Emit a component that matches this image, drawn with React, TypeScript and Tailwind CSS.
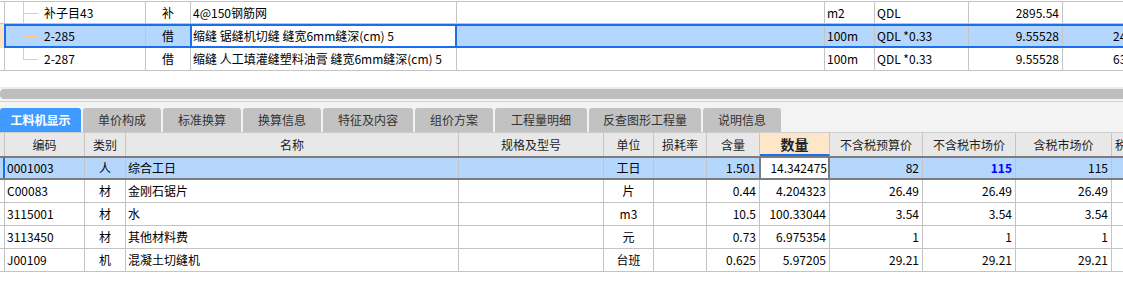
import React from "react";

const FONT = "font-['Noto_Sans_CJK_SC','Noto_Sans',sans-serif]";

const tabs = [
  { label: "工料机显示", w: "w-[81px]", active: true },
  { label: "单价构成", w: "w-[78px]" },
  { label: "标准换算", w: "w-[78px]" },
  { label: "换算信息", w: "w-[78px]" },
  { label: "特征及内容", w: "w-[90px]" },
  { label: "组价方案", w: "w-[78px]" },
  { label: "工程量明细", w: "w-[92px]" },
  { label: "反查图形工程量", w: "w-[112px]" },
  { label: "说明信息", w: "w-[78px]" },
];

type Row = {
  code: string;
  type: string;
  name: string;
  unit: string;
  amt: string;
  qty: string;
  p1: string;
  p2: string;
  p3: string;
};

const rows: Row[] = [
  { code: "0001003", type: "人", name: "综合工日", unit: "工日", amt: "1.501", qty: "14.342475", p1: "82", p2: "115", p3: "115" },
  { code: "C00083", type: "材", name: "金刚石锯片", unit: "片", amt: "0.44", qty: "4.204323", p1: "26.49", p2: "26.49", p3: "26.49" },
  { code: "3115001", type: "材", name: "水", unit: "m3", amt: "10.5", qty: "100.33044", p1: "3.54", p2: "3.54", p3: "3.54" },
  { code: "3113450", type: "材", name: "其他材料费", unit: "元", amt: "0.73", qty: "6.975354", p1: "1", p2: "1", p3: "1" },
  { code: "J00109", type: "机", name: "混凝土切缝机", unit: "台班", amt: "0.625", qty: "5.97205", p1: "29.21", p2: "29.21", p3: "29.21" },
];

function TreeMark({ last, left }: { last?: boolean; left: string }) {
  return (
    <>
      <span className={`absolute ${left} top-0 w-px bg-[#ffc878] ${last ? "h-1/2" : "bottom-0"}`} />
      <span className={`absolute ${left} top-1/2 w-[15px] h-px bg-[#ffc878]`} />
    </>
  );
}

function TopGrid() {
  const cell = "shrink-0 border-r border-[#c4c4c4] flex items-center";
  return (
    <div className="mt-px border-t border-[#c4c4c4]">
      {/* row 1 */}
      <div className="flex h-[22px] border-b border-[#c4c4c4]">
        <div className={`w-[5px] ${cell}`} />
        <div className={`relative w-[141px] pl-[39px] ${cell}`}>
          <TreeMark left="left-[18px]" />
          补子目43
        </div>
        <div className={`w-[45px] justify-center ${cell}`}>补</div>
        <div className={`w-[266px] pl-[2px] ${cell}`}>4@150钢筋网</div>
        <div className={`w-[368px] ${cell}`} />
        <div className={`w-[50px] pl-[2px] ${cell}`}>m2</div>
        <div className={`w-[94px] pl-[2px] ${cell}`}>QDL</div>
        <div className={`w-[94px] justify-end pr-[3px] ${cell}`}>2895.54</div>
        <div className="flex-1" />
      </div>
      {/* row 2 selected */}
      <div className="flex h-[24px]">
        <div className="w-[4px] shrink-0 bg-[#fde2c4]" />
        <div className="flex flex-1 border-y-2 border-l-2 border-[#1a6ff0] bg-[#b5d7fd]">
          <div className={`relative w-[140px] pl-[38px] ${cell}`}>
            <TreeMark left="left-[17px]" />
            2-285
          </div>
          <div className="w-[44px] shrink-0 flex items-center justify-center">借</div>
          <div className="w-[267px] shrink-0 flex items-center pl-[1px] bg-white border-x-2 border-[#1a6ff0]">
            缩缝 锯缝机切缝 缝宽6mm缝深(cm) 5
          </div>
          <div className={`w-[368px] ${cell}`} />
          <div className={`w-[50px] pl-[2px] ${cell}`}>100m</div>
          <div className={`w-[94px] pl-[2px] ${cell}`}>QDL *0.33</div>
          <div className={`w-[94px] justify-end pr-[3px] ${cell}`}>9.55528</div>
          <div className="flex-1 flex items-center pl-[50px] whitespace-nowrap">2436.84</div>
        </div>
      </div>
      {/* row 3 */}
      <div className="flex h-[23px] border-b border-[#c4c4c4]">
        <div className={`w-[5px] ${cell}`} />
        <div className={`relative w-[141px] pl-[39px] ${cell}`}>
          <TreeMark left="left-[18px]" last />
          2-287
        </div>
        <div className={`w-[45px] justify-center ${cell}`}>借</div>
        <div className={`w-[266px] pl-[2px] whitespace-nowrap ${cell}`}>缩缝 人工填灌缝塑料油膏 缝宽6mm缝深(cm) 5</div>
        <div className={`w-[368px] ${cell}`} />
        <div className={`w-[50px] pl-[2px] ${cell}`}>100m</div>
        <div className={`w-[94px] pl-[2px] ${cell}`}>QDL *0.33</div>
        <div className={`w-[94px] justify-end pr-[3px] ${cell}`}>9.55528</div>
        <div className="flex-1 flex items-center pl-[50px] whitespace-nowrap">6354.12</div>
      </div>
    </div>
  );
}

function TabStrip() {
  return (
    <div>
      <div className="h-[2px] bg-[#ebebeb]" />
      <div className="h-[10px] bg-[#bebebe] rounded-l-[4px]" />
      <div className="h-[2px] bg-[#f4f4f4]" />
      <div className="h-px bg-[#d4d4d4]" />
      <div className="h-[30px] bg-[#f3f3f3] flex items-end gap-[2px]">
        {tabs.map((t) => (
          <div
            key={t.label}
            className={`${t.w} h-[24px] shrink-0 rounded-t-[3px] flex items-center justify-center text-[12px] ${
              t.active ? "bg-[#3f9bff] text-white font-bold" : "bg-[#c2c2c2] text-[#333]"
            }`}
          >
            {t.label}
          </div>
        ))}
      </div>
    </div>
  );
}

function Header() {
  const h = "shrink-0 border-r border-[#c4c4c4] flex items-center justify-center";
  return (
    <div className="flex h-[24px] bg-[#e8e8e8] border-t border-[#cdcdcd] text-[12px] text-[#1e1e1e]">
      <div className={`w-[5px] ${h}`} />
      <div className={`w-[80px] ${h}`}>编码</div>
      <div className={`w-[41px] ${h}`}>类别</div>
      <div className={`w-[333px] ${h}`}>名称</div>
      <div className={`w-[145px] ${h}`}>规格及型号</div>
      <div className={`w-[50px] ${h}`}>单位</div>
      <div className={`w-[53px] ${h}`}>损耗率</div>
      <div className={`w-[53px] ${h}`}>含量</div>
      <div className={`w-[70px] ${h} bg-[#fee6c8] border-b-2 border-b-[#1a6ff0] text-[14px] font-bold text-[#222]`}>数量</div>
      <div className={`w-[93px] ${h}`}>不含税预算价</div>
      <div className={`w-[93px] ${h}`}>不含税市场价</div>
      <div className={`w-[96px] ${h}`}>含税市场价</div>
      <div className="flex-1 flex items-center pl-[3px] whitespace-nowrap">税率(%)</div>
    </div>
  );
}

function BodyRow({ r, selected }: { r: Row; selected?: boolean }) {
  const c = "shrink-0 border-r border-[#c4c4c4] flex items-center";
  const rowCls = selected
    ? "flex h-[24px] border-y-2 border-[#7c7c7c] bg-[#b5d7fd]"
    : "flex h-[23px] border-b border-[#c4c4c4]";
  return (
    <div className={rowCls}>
      {selected ? (
        <div className="w-[5px] shrink-0 flex">
          <div className="ml-[3px] w-[2px] bg-[#1a6ff0]" />
        </div>
      ) : (
        <div className={`w-[5px] ${c}`} />
      )}
      <div className={`w-[80px] pl-[2px] ${c}`}>{r.code}</div>
      <div className={`w-[41px] justify-center ${c}`}>{r.type}</div>
      <div className={`w-[333px] pl-[2px] ${c}`}>{r.name}</div>
      <div className={`w-[145px] ${c}`} />
      <div className={`w-[50px] justify-center ${c}`}>{r.unit}</div>
      <div className={`w-[53px] ${c}`} />
      {selected ? (
        <>
          <div className="w-[52px] shrink-0 flex items-center justify-end pr-[3px]">{r.amt}</div>
          <div className="w-[71px] shrink-0 flex items-center justify-end pr-[1px] bg-white border-x-2 border-[#7c7c7c]">{r.qty}</div>
        </>
      ) : (
        <>
          <div className={`w-[53px] justify-end pr-[3px] ${c}`}>{r.amt}</div>
          <div className={`w-[70px] justify-end pr-[3px] ${c}`}>{r.qty}</div>
        </>
      )}
      <div className={`w-[93px] justify-end pr-[3px] ${c}`}>{r.p1}</div>
      <div className={`w-[93px] justify-end pr-[3px] ${c} ${selected ? "font-bold text-[#0000ff]" : ""}`}>{r.p2}</div>
      <div className={`w-[96px] justify-end pr-[3px] ${c}`}>{r.p3}</div>
      <div className="flex-1" />
    </div>
  );
}

export default function App() {
  return (
    <div className={`w-[1123px] h-[291px] overflow-hidden bg-white text-[12px] text-black leading-none ${FONT}`}>
      <TopGrid />
      <div className="h-[16px]" />
      <TabStrip />
      <Header />
      {rows.map((r, i) => (
        <BodyRow key={r.code} r={r} selected={i === 0} />
      ))}
    </div>
  );
}
